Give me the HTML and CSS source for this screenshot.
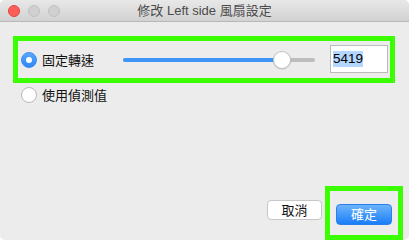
FILE: index.html
```html
<!DOCTYPE html>
<html>
<head>
<meta charset="utf-8">
<link rel="stylesheet" href="styles.css">
</head>
<body>
<div class="window">
  <div class="titlebar">
    <div class="lights">
      <span class="light close"></span>
      <span class="light off"></span>
      <span class="light off"></span>
    </div>
    <div class="title">修改 Left side 風扇設定</div>
  </div>
  <div class="content">
    <div class="row fixed">
      <span class="radio on"></span>
      <span class="label">固定轉速</span>
      <div class="slider">
        <div class="track"><div class="fill" style="width:159px"></div></div>
        <span class="thumb" style="left:159px"></span>
      </div>
      <div class="input"><span class="sel">5419</span></div>
    </div>
    <div class="row sensor">
      <span class="radio"></span>
      <span class="label">使用偵測值</span>
    </div>
  </div>
  <div class="buttons">
    <button class="btn cancel">取消</button>
    <div class="okbox"><button class="btn ok">確定</button></div>
  </div>
</div>
</body>
</html>
```
FILE: styles.css
```css
html, body {
  margin: 0;
  padding: 0;
  background: #ffffff;
}
body {
  font-family: "Noto Sans CJK TC", "Liberation Sans", sans-serif;
  width: 412px;
  height: 240px;
  overflow: hidden;
}
.window {
  width: 409px;
  height: 240px;
  background: #ececec;
  border-radius: 5px;
  overflow: hidden;
  display: flex;
  flex-direction: column;
}
.titlebar {
  height: 21px;
  border-bottom: 1px solid #b8b8b8;
  background: linear-gradient(#e9e8e9, #d3d2d3);
  position: relative;
  display: flex;
  align-items: center;
  flex-shrink: 0;
}
.lights {
  display: flex;
  gap: 8px;
  padding-left: 8px;
  position: absolute;
  left: 0;
  top: 5px;
}
.light {
  width: 12px;
  height: 12px;
  border-radius: 50%;
  box-sizing: border-box;
}
.light.close {
  background: #fc5f57;
  border: 1px solid #e0443e;
}
.light.off {
  background: #d1d0d1;
  border: 1px solid #c0bfc0;
}
.title {
  flex: 1;
  text-align: center;
  font-size: 13px;
  color: #4a4a4a;
  line-height: 21px;
  font-family: "Liberation Sans", "Noto Sans CJK TC", sans-serif;
}
.content {
  padding: 14px 14px 0 13px;
  display: flex;
  flex-direction: column;
}
.row {
  display: flex;
  align-items: center;
}
.row.fixed {
  border: 5px solid #3bff00;
  height: 37px;
  padding-left: 3px;
  padding-right: 2px;
}
.row.sensor {
  margin-top: 4px;
  padding-left: 8px;
  height: 16px;
}
.radio {
  width: 16px;
  height: 16px;
  border-radius: 50%;
  box-sizing: border-box;
  background: #fff;
  border: 1px solid #b9b9b9;
  flex-shrink: 0;
  position: relative;
}
.radio.on {
  background: linear-gradient(#5aa8fa, #2f87f5);
  border: 1px solid #3a8cf0;
}
.radio.on::after {
  content: "";
  position: absolute;
  width: 6px;
  height: 6px;
  border-radius: 50%;
  background: #fff;
  left: 4px;
  top: 4px;
}
.label {
  margin-left: 5px;
  font-size: 13px;
  color: #111;
  line-height: 16px;
}
.slider {
  position: relative;
  width: 192px;
  height: 18px;
  margin-left: 29px;
  display: flex;
  align-items: center;
}
.track {
  width: 100%;
  height: 4px;
  border-radius: 2px;
  background: #bdbdbd;
}
.fill {
  height: 4px;
  border-radius: 2px;
  background: #3d96f5;
}
.thumb {
  position: absolute;
  top: 0;
  width: 18px;
  height: 18px;
  margin-left: -9px;
  border-radius: 50%;
  background: #fff;
  box-sizing: border-box;
  border: 1px solid #c4c4c4;
  box-shadow: 0 0.5px 1px rgba(0,0,0,0.2);
}
.input {
  margin-left: auto;
  width: 58px;
  height: 28px;
  box-sizing: border-box;
  border: 1px solid #bcbcbc;
  background: #fff;
  display: flex;
  align-items: center;
  padding-left: 2px;
  margin-top: -1px;
}
.sel {
  background: #b3d7ff;
  font-family: "Liberation Sans", sans-serif;
  font-size: 13.5px;
  line-height: 16px;
  color: #000;
}
.buttons {
  margin-top: auto;
  display: flex;
  justify-content: flex-end;
  align-items: flex-start;
  padding-right: 6px;
  height: 54px;
}
.btn {
  font-family: "Noto Sans CJK TC", sans-serif;
  font-size: 13px;
  padding: 0;
  box-sizing: border-box;
  border-radius: 4px;
  line-height: 18px;
}
.cancel {
  margin-top: 14px;
  margin-right: 3px;
  width: 55px;
  height: 20px;
  background: #fff;
  border: 1px solid #c6c6c6;
  color: #111;
}
.okbox {
  border: 5px solid #3bff00;
  height: 54px;
  box-sizing: border-box;
  padding: 9px 6px 0 6px;
}
.ok {
  width: 56px;
  height: 21px;
  border: 1px solid #2a7ff0;
  background: linear-gradient(#6db4fb, #1a7ef8);
  color: #fff;
}
```
